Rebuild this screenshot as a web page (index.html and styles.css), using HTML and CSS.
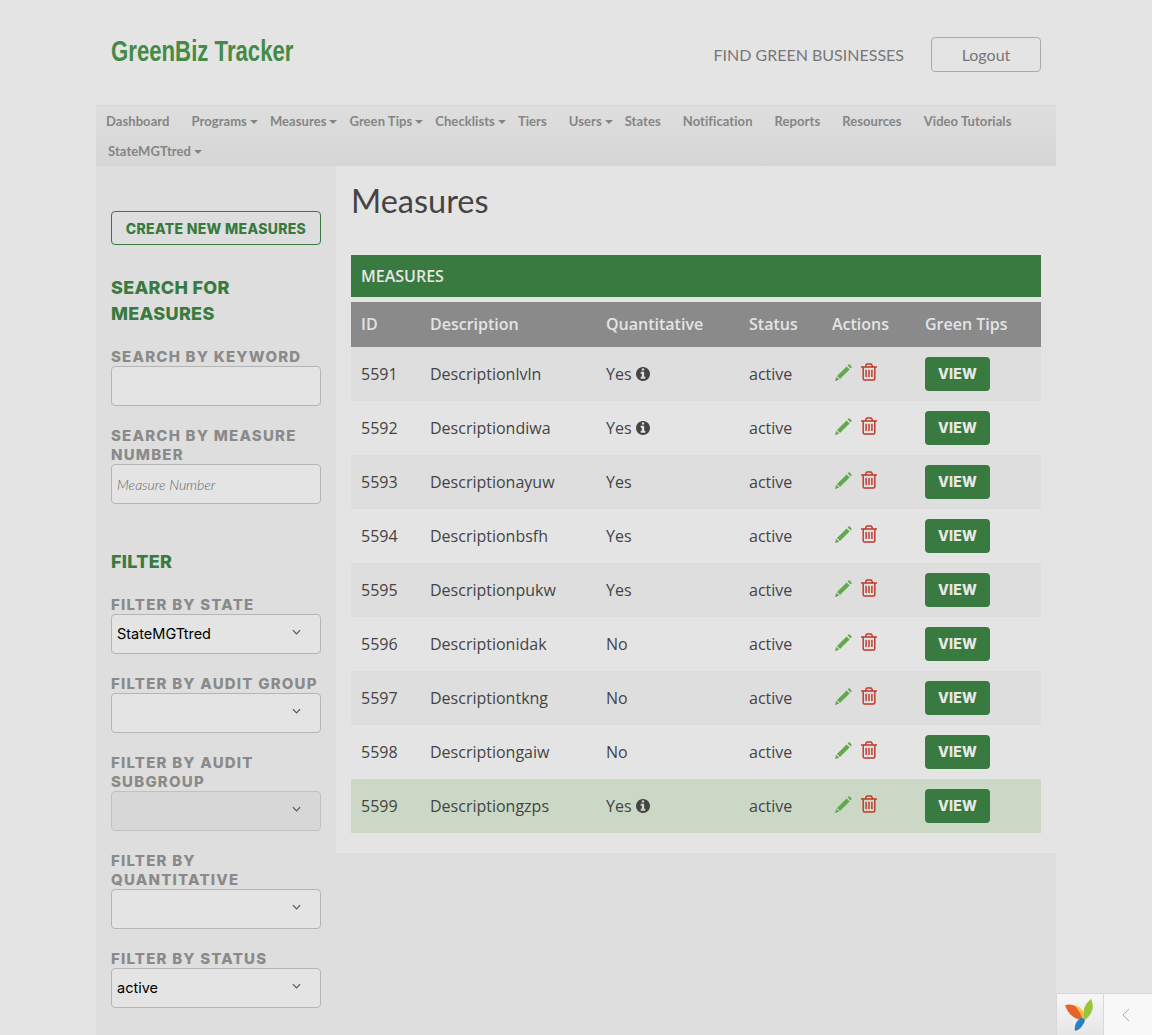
FILE: index.html
```html
<!DOCTYPE html>
<html lang="en">
<head>
  <meta charset="UTF-8">
  <title>GreenBiz Tracker - Measures</title>
  <link rel="stylesheet" href="styles.css">
</head>
<body>
  <svg class="icon-defs" aria-hidden="true">
    <symbol id="i-pencil" viewBox="0 0 18 18">
      <path d="M1 17l1.2-4.2 3 3z"/>
      <path d="M3 12L12.6 2.4l3 3L6 15z"/>
      <path d="M13.6 1.4l.8-.8a1 1 0 0 1 1.3 0l1.700 1.700a1 1 0 0 1 0 1.300l-.8.8z"/>
    </symbol>
    <symbol id="i-trash" viewBox="0 0 1408 1536">
      <path transform="translate(-192 -128)" d="M704 736v576q0 14-9 23t-23 9h-64q-14 0-23-9t-9-23v-576q0-14 9-23t23-9h64q14 0 23 9t9 23zm256 0v576q0 14-9 23t-23 9h-64q-14 0-23-9t-9-23v-576q0-14 9-23t23-9h64q14 0 23 9t9 23zm256 0v576q0 14-9 23t-23 9h-64q-14 0-23-9t-9-23v-576q0-14 9-23t23-9h64q14 0 23 9t9 23zm128 724v-948h-896v948q0 22 7 40.500t14.500 27 10.500 8.500h832q3 0 10.500-8.500t14.500-27 7-40.500zm-672-1076h448l-48-117q-7-9-17-11h-317q-10 2-17 11zm928 32v64q0 14-9 23t-23 9h-96v948q0 83-47 143.500t-113 60.500h-832q-66 0-113-58.500t-47-141.500v-952h-96q-14 0-23-9t-9-23v-64q0-14 9-23t23-9h309l70-167q15-37 54-63t79-26h320q40 0 79 26t54 63l70 167h309q14 0 23 9t9 23z"/>
    </symbol>
    <symbol id="i-info" viewBox="128 128 1536 1536">
      <path d="M1152 1376v-160q0-14-9-23t-23-9h-96v-512q0-14-9-23t-23-9h-320q-14 0-23 9t-9 23v160q0 14 9 23t23 9h96v320h-96q-14 0-23 9t-9 23v160q0 14 9 23t23 9h448q14 0 23-9t9-23zm-128-896v-160q0-14-9-23t-23-9h-192q-14 0-23 9t-9 23v160q0 14 9 23t23 9h192q14 0 23-9t9-23zm640 416q0 209-103 385.500t-279.500 279.500-385.500 103-385.500-103-279.500-279.500-103-385.500 103-385.500 279.500-279.500 385.500-103 385.500 103 279.500 279.500 103 385.500z"/>
    </symbol>
    <symbol id="i-chevron" viewBox="0 0 10 6">
      <path d="M1 1l4 4 4-4" fill="none" stroke="currentColor" stroke-width="1.300"/>
    </symbol>
  </svg>

  <div class="page">
    <header class="site-header">
      <a class="logo" href="#">GreenBiz Tracker</a>
      <div class="header-links">
        <a class="find-link" href="#">FIND GREEN BUSINESSES</a>
        <a class="logout-btn" href="#">Logout</a>
      </div>
    </header>

    <nav class="main-nav">
      <a class="nav-item" href="#">Dashboard</a>
      <a class="nav-item has-caret" href="#">Programs</a>
      <a class="nav-item has-caret" href="#">Measures</a>
      <a class="nav-item has-caret" href="#">Green Tips</a>
      <a class="nav-item has-caret" href="#">Checklists</a>
      <a class="nav-item" href="#">Tiers</a>
      <a class="nav-item has-caret" href="#">Users</a>
      <a class="nav-item" href="#">States</a>
      <a class="nav-item" href="#">Notification</a>
      <a class="nav-item" href="#">Reports</a>
      <a class="nav-item" href="#">Resources</a>
      <a class="nav-item" href="#">Video Tutorials</a>
      <a class="nav-item has-caret nav-state" href="#">StateMGTtred</a>
    </nav>

    <div class="content-wrap">
      <aside class="sidebar">
        <a class="create-btn" href="#">CREATE NEW MEASURES</a>

        <h3 class="side-title">SEARCH FOR MEASURES</h3>
        <div class="field">
          <label>SEARCH BY KEYWORD</label>
          <input type="text">
        </div>
        <div class="field">
          <label>SEARCH BY MEASURE NUMBER</label>
          <input type="text" placeholder="Measure Number">
        </div>

        <h3 class="side-title filter-title">FILTER</h3>
        <div class="field">
          <label>FILTER BY STATE</label>
          <div class="select-wrap">
            <select><option>StateMGTtred</option></select>
            <svg class="chevron"><use href="#i-chevron"/></svg>
          </div>
        </div>
        <div class="field">
          <label>FILTER BY AUDIT GROUP</label>
          <div class="select-wrap">
            <select><option></option></select>
            <svg class="chevron"><use href="#i-chevron"/></svg>
          </div>
        </div>
        <div class="field">
          <label>FILTER BY AUDIT SUBGROUP</label>
          <div class="select-wrap">
            <select disabled><option></option></select>
            <svg class="chevron"><use href="#i-chevron"/></svg>
          </div>
        </div>
        <div class="field">
          <label>FILTER BY QUANTITATIVE</label>
          <div class="select-wrap">
            <select><option></option></select>
            <svg class="chevron"><use href="#i-chevron"/></svg>
          </div>
        </div>
        <div class="field">
          <label>FILTER BY STATUS</label>
          <div class="select-wrap">
            <select><option>active</option></select>
            <svg class="chevron"><use href="#i-chevron"/></svg>
          </div>
        </div>
      </aside>

      <main class="main">
        <h1 class="page-title">Measures</h1>
        <div class="table-title">MEASURES</div>
        <table class="measures">
          <thead>
            <tr>
              <th class="col-id">ID</th>
              <th class="col-desc">Description</th>
              <th class="col-quant">Quantitative</th>
              <th class="col-status">Status</th>
              <th class="col-actions">Actions</th>
              <th>Green Tips</th>
            </tr>
          </thead>
          <tbody>
            <tr>
              <td>5591</td><td>Descriptionlvln</td>
              <td>Yes <svg class="info"><use href="#i-info"/></svg></td>
              <td>active</td>
              <td><svg class="edit"><use href="#i-pencil"/></svg><svg class="trash"><use href="#i-trash"/></svg></td>
              <td><a class="view-btn" href="#">VIEW</a></td>
            </tr>
            <tr>
              <td>5592</td><td>Descriptiondiwa</td>
              <td>Yes <svg class="info"><use href="#i-info"/></svg></td>
              <td>active</td>
              <td><svg class="edit"><use href="#i-pencil"/></svg><svg class="trash"><use href="#i-trash"/></svg></td>
              <td><a class="view-btn" href="#">VIEW</a></td>
            </tr>
            <tr>
              <td>5593</td><td>Descriptionayuw</td>
              <td>Yes</td>
              <td>active</td>
              <td><svg class="edit"><use href="#i-pencil"/></svg><svg class="trash"><use href="#i-trash"/></svg></td>
              <td><a class="view-btn" href="#">VIEW</a></td>
            </tr>
            <tr>
              <td>5594</td><td>Descriptionbsfh</td>
              <td>Yes</td>
              <td>active</td>
              <td><svg class="edit"><use href="#i-pencil"/></svg><svg class="trash"><use href="#i-trash"/></svg></td>
              <td><a class="view-btn" href="#">VIEW</a></td>
            </tr>
            <tr>
              <td>5595</td><td>Descriptionpukw</td>
              <td>Yes</td>
              <td>active</td>
              <td><svg class="edit"><use href="#i-pencil"/></svg><svg class="trash"><use href="#i-trash"/></svg></td>
              <td><a class="view-btn" href="#">VIEW</a></td>
            </tr>
            <tr>
              <td>5596</td><td>Descriptionidak</td>
              <td>No</td>
              <td>active</td>
              <td><svg class="edit"><use href="#i-pencil"/></svg><svg class="trash"><use href="#i-trash"/></svg></td>
              <td><a class="view-btn" href="#">VIEW</a></td>
            </tr>
            <tr>
              <td>5597</td><td>Descriptiontkng</td>
              <td>No</td>
              <td>active</td>
              <td><svg class="edit"><use href="#i-pencil"/></svg><svg class="trash"><use href="#i-trash"/></svg></td>
              <td><a class="view-btn" href="#">VIEW</a></td>
            </tr>
            <tr>
              <td>5598</td><td>Descriptiongaiw</td>
              <td>No</td>
              <td>active</td>
              <td><svg class="edit"><use href="#i-pencil"/></svg><svg class="trash"><use href="#i-trash"/></svg></td>
              <td><a class="view-btn" href="#">VIEW</a></td>
            </tr>
            <tr class="row-highlight">
              <td>5599</td><td>Descriptiongzps</td>
              <td>Yes <svg class="info"><use href="#i-info"/></svg></td>
              <td>active</td>
              <td><svg class="edit"><use href="#i-pencil"/></svg><svg class="trash"><use href="#i-trash"/></svg></td>
              <td><a class="view-btn" href="#">VIEW</a></td>
            </tr>
          </tbody>
        </table>
      </main>
    </div>
  </div>

  <!-- debug toolbar, collapsed -->
  <div class="debug-bar">
    <div class="debug-logo">
      <svg viewBox="0 0 30 32" width="30" height="32">
        <path fill="#e8632a" d="M0 6c7-2 15 1 19 10l-1 5C11 21 3 16 0 6z"/>
        <path fill="#f4c53f" d="M9 6c5 1 9 4 10 10l-1 5c-2-6-5-11-9-15z"/>
        <path fill="#9bc43a" d="M26 0c3 6 3 14-6 21-3-6-2-15 6-21z"/>
        <path fill="#2a80c4" d="M16 19c3 0 5 1 3 5-2 4-5 7-9 8-1-5 1-10 6-13z"/>
      </svg>
    </div>
    <div class="debug-toggle">
      <svg viewBox="0 0 8 14" width="8" height="14"><path d="M7 1L1 7l6 6" fill="none" stroke="#aaa" stroke-width="1"/></svg>
    </div>
  </div>
</body>
</html>
```

FILE: styles.css
```css
* {
  box-sizing: border-box;
}

html, body {
  margin: 0;
  padding: 0;
}

body {
  font-family: 'Lato', 'Open Sans', sans-serif;
  background-color: #e4e4e4;
  color: #444;
  overflow: hidden;
  height: 1035px;
}

a {
  text-decoration: none;
}

.icon-defs {
  display: none;
}

.page {
  width: 960px;
  margin: 0 auto;
}

/* header */
.site-header {
  height: 105px;
  display: flex;
  justify-content: space-between;
  align-items: flex-start;
  padding: 37px 15px 0;
}

.logo {
  display: inline-block;
  font-family: 'Liberation Sans', sans-serif;
  font-weight: 700;
  font-size: 29px;
  line-height: 30px;
  margin-top: -1px;
  color: #458a45;
  transform: scaleX(0.765);
  transform-origin: left center;
}

.header-links {
  display: flex;
  align-items: center;
}

.find-link {
  font-size: 16px;
  color: #777;
  margin-right: 27px;
}

.logout-btn {
  width: 110px;
  height: 35px;
  line-height: 34px;
  text-align: center;
  font-size: 16px;
  color: #777;
  border: 1px solid #aaa;
  border-radius: 4px;
}

/* nav */
.main-nav {
  height: 61px;
  display: flex;
  flex-wrap: wrap;
  align-content: flex-start;
  padding: 0 0 0 10px;
  border-top: 1px solid #d4d4d4;
  background: linear-gradient(#dedede, #d6d6d6);
}

.nav-item {
  font-size: 13px;
  font-weight: 700;
  line-height: 30px;
  letter-spacing: 0.07px;
  color: #858585;
  margin-right: 22px;
}

.nav-item.has-caret {
  margin-right: 12px;
}

.has-caret::after {
  content: "";
  display: inline-block;
  margin-left: 3px;
  vertical-align: 2px;
  border-top: 4px solid #858585;
  border-left: 4px solid transparent;
  border-right: 4px solid transparent;
}

.nav-state {
  margin-left: 2px;
}

/* layout */
.content-wrap {
  display: flex;
  align-items: flex-start;
  background-color: #dedede;
  min-height: 869px;
}

.sidebar {
  width: 240px;
  padding: 45px 15px 0;
}

.main {
  width: 720px;
  padding: 0 15px 20px;
  background-color: #e4e4e4;
}

/* sidebar */
.create-btn {
  display: block;
  height: 34px;
  line-height: 33px;
  text-align: center;
  font-family: 'Inter', sans-serif;
  font-size: 14px;
  font-weight: 800;
  letter-spacing: 0.3px;
  color: #387a3f;
  border: 1px solid #387a3f;
  border-radius: 4px;
}

.side-title {
  font-family: 'Inter', sans-serif;
  font-size: 18px;
  font-weight: 800;
  line-height: 26px;
  letter-spacing: 0.3px;
  color: #387a3f;
  margin: 30px 0 0;
}

.filter-title {
  margin-top: 45px;
}

.field {
  margin-top: 20px;
}

.field label {
  display: block;
  font-family: 'Inter', sans-serif;
  font-size: 15px;
  font-weight: 800;
  line-height: 19px;
  letter-spacing: 1.2px;
  color: #8a8a8a;
}

.field input,
.field select {
  display: block;
  width: 100%;
  height: 40px;
  padding: 0 5px;
  border: 1px solid #b5b5b5;
  border-radius: 4px;
  background-color: #e4e4e4;
  outline: none;
}

.field input {
  font-family: 'Lato', sans-serif;
  font-size: 14px;
}

.field input::placeholder {
  font-style: italic;
  font-weight: 300;
  color: #666;
  opacity: 1;
}

.field select {
  appearance: none;
  padding-bottom: 2px;
  font-family: 'Inter', sans-serif;
  font-size: 14.5px;
  color: #000;
}

.field select:disabled {
  background-color: #d5d5d5;
}

.select-wrap {
  position: relative;
}

.chevron {
  position: absolute;
  right: 20px;
  top: 15px;
  width: 9px;
  height: 6px;
  color: #555;
}

/* main */
.page-title {
  font-size: 32.5px;
  font-weight: 400;
  line-height: 38px;
  color: #444;
  margin: 0;
  padding-top: 16px;
  height: 89px;
}

.table-title {
  height: 42px;
  line-height: 42px;
  padding-left: 10px;
  font-family: 'Open Sans', sans-serif;
  font-size: 16px;
  font-weight: 600;
  color: #e6e6e6;
  background-color: #387a3f;
  margin-bottom: 5px;
}

.measures {
  width: 690px;
  border-collapse: collapse;
  table-layout: fixed;
  font-family: 'Open Sans', sans-serif;
  font-size: 16px;
}

.measures th {
  height: 45px;
  padding: 0 10px 2px;
  text-align: left;
  font-size: 16px;
  font-weight: 600;
  color: #e4e4e4;
  background-color: #8a8a8a;
}

.col-id { width: 69px; }
.col-desc { width: 176px; }
.col-quant { width: 143px; }
.col-status { width: 83px; }
.col-actions { width: 93px; }

.measures td {
  height: 54px;
  padding: 0 10px;
  color: #444;
}

.measures tbody tr:nth-child(odd) td {
  background-color: #dedede;
}

.measures tbody tr.row-highlight td {
  background-color: #cbd8c5;
}

.info {
  width: 14px;
  height: 14px;
  fill: #444;
  vertical-align: -1px;
}

.edit {
  width: 18px;
  height: 18px;
  fill: #62a94e;
  margin-left: 2px;
  vertical-align: -2px;
}

.trash {
  width: 16px;
  height: 18px;
  fill: #c0392b;
  margin-left: 9px;
  vertical-align: -1px;
}

.view-btn {
  display: block;
  width: 65px;
  height: 34px;
  line-height: 33px;
  text-align: center;
  font-family: 'Inter', sans-serif;
  font-size: 14px;
  font-weight: 800;
  letter-spacing: 0.2px;
  color: #e8e8e8;
  background-color: #387a3f;
  border-radius: 4px;
}

/* debug toolbar */
.debug-bar {
  position: fixed;
  right: 0;
  bottom: 0;
  width: 96px;
  height: 42px;
  display: flex;
  background-color: #f2f2f2;
  border-top: 1px solid #d8d8d8;
  border-left: 1px solid #d8d8d8;
}

.debug-logo {
  width: 47px;
  display: flex;
  align-items: center;
  justify-content: center;
  background: linear-gradient(#f6f6f6, #e6e6e6);
  border-right: 1px solid #d8d8d8;
}

.debug-toggle {
  flex: 1;
  display: flex;
  align-items: center;
  justify-content: center;
  padding-right: 4px;
  background-color: #f8f8f8;
}
```
